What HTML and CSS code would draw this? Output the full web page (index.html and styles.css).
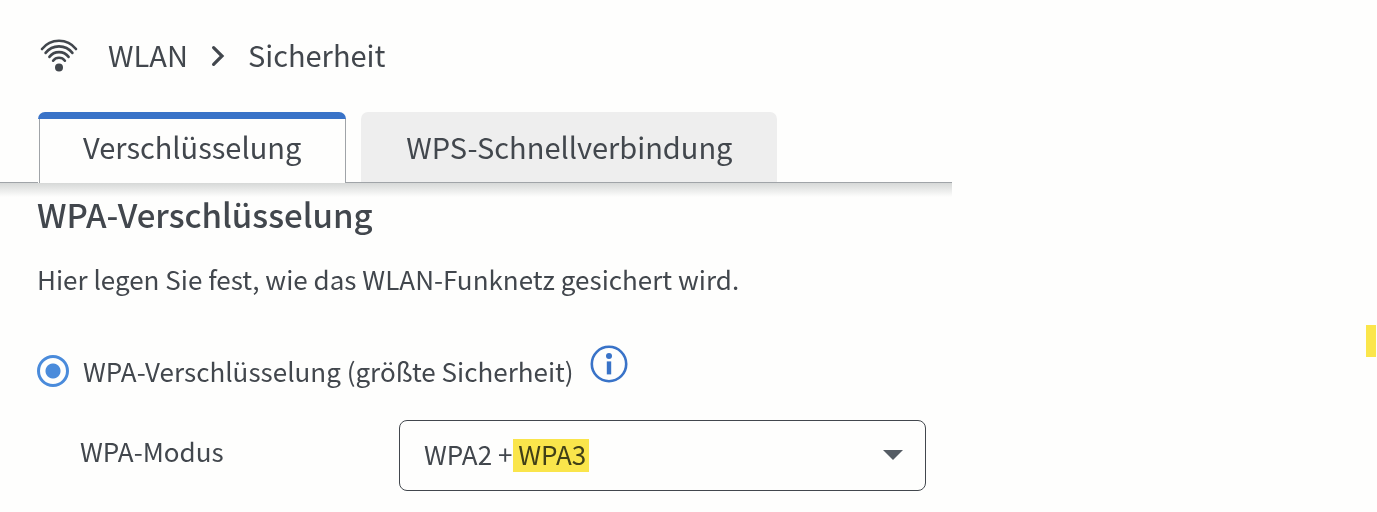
FILE: index.html
```html
<!DOCTYPE html>
<html lang="de">
<head>
    <meta charset="UTF-8">
    <meta name="viewport" content="width=device-width, initial-scale=1.0">
    <title>WLAN - Sicherheit</title>
    <link rel="stylesheet" href="styles.css">
</head>
<body>
    <div class="page">
        <main class="content">
            <nav class="breadcrumb">
                <svg class="wifi-icon" viewBox="0 0 38 34" fill="none" stroke="#42474d" stroke-width="2.6" stroke-linecap="round">
                    <path d="M2 10 A21.6 21.6 0 0 1 36 10"/>
                    <path d="M5.6 13.9 A17 17 0 0 1 32.4 13.9"/>
                    <path d="M9.4 17.9 A12 12 0 0 1 28.6 17.9"/>
                    <path d="M13.1 21.7 A7.4 7.4 0 0 1 24.9 21.7"/>
                    <circle cx="19" cy="28.4" r="4" fill="#42474d" stroke="none"/>
                </svg>
                <a href="#wlan">WLAN</a>
                <svg class="chevron" viewBox="0 0 14 22" fill="none" stroke="#42474d" stroke-width="3.2" stroke-linecap="round">
                    <path d="M2.6 2.6 L11 11 L2.6 19.4"/>
                </svg>
                <span>Sicherheit</span>
            </nav>

            <div class="tabs" role="tablist">
                <button class="tab active" role="tab" aria-selected="true">Verschlüsselung</button>
                <button class="tab" role="tab" aria-selected="false">WPS-Schnellverbindung</button>
            </div>

            <form class="panel">
                <h1>WPA-Verschlüsselung</h1>
                <p>Hier legen Sie fest, wie das WLAN-Funknetz gesichert wird.</p>

                <div class="option">
                    <input type="radio" id="wpa" name="security" checked>
                    <label for="wpa">WPA-Verschlüsselung (größte Sicherheit)</label>
                    <button type="button" class="info-btn" aria-label="Info">
                        <svg viewBox="0 0 38 38">
                            <circle cx="19" cy="19" r="17.2" fill="none" stroke="#3973c8" stroke-width="2.6"/>
                            <circle cx="19" cy="11" r="3" fill="#3973c8"/>
                            <rect x="16.8" y="16.4" width="4.4" height="13" fill="#3973c8"/>
                        </svg>
                    </button>
                </div>

                <div class="field">
                    <label for="mode">WPA-Modus</label>
                    <div class="select-box">
                        <select id="mode">
                            <option>WPA2 + WPA3</option>
                        </select>
                        <svg class="arrow" viewBox="0 0 20 10"><path d="M0 0 H20 L10 10 Z" fill="#555c64"/></svg>
                        <span class="marker"></span>
                    </div>
                </div>
            </form>
        </main>
        <aside class="side-mark"></aside>
    </div>
</body>
</html>
```

FILE: styles.css
```css
* {
    box-sizing: border-box;
}
body {
    margin: 0;
    background: #fefefd;
    color: #42474d;
    font-family: "Noto Sans CJK SC", "Open Sans", sans-serif;
    font-size: 26px;
    line-height: 36px;
}
button, select {
    font: inherit;
    color: inherit;
}
.page {
    display: flex;
    justify-content: space-between;
}
.content {
    flex: 0 1 952px;
}
.breadcrumb {
    display: flex;
    align-items: center;
    height: 112px;
    padding: 0 40px;
    font-size: 29px;
}
.breadcrumb a, .breadcrumb span {
    padding-bottom: 4px;
    color: inherit;
    text-decoration: none;
}
.wifi-icon {
    width: 38px;
    height: 34px;
    margin-right: 30px;
}
.chevron {
    width: 14px;
    height: 22px;
    margin: 0 23px;
}
.tabs {
    display: flex;
    gap: 15px;
    padding-left: 38px;
    border-bottom: 1px solid #a0a4a8;
}
.tab {
    height: 70px;
    padding: 0 45px 3px;
    border: none;
    border-radius: 7px 7px 0 0;
    background: #eeeeee;
    font-size: 29px;
    white-space: nowrap;
}
.tab.active {
    height: 71px;
    margin-bottom: -1px;
    padding-bottom: 4px;
    background:
        linear-gradient(#3973c8, #3973c8) top / 100% 7px no-repeat,
        linear-gradient(#a0a4a8, #a0a4a8) left 1px top / 1px 100% no-repeat,
        linear-gradient(#a0a4a8, #a0a4a8) right / 1px 100% no-repeat,
        #fefefd;
}
.panel {
    padding: 10px 26px 20px 37px;
    background: linear-gradient(#d6d8d7, #fefefd) top / 100% 14px no-repeat;
}
h1 {
    margin: 0;
    font-size: 33px;
    line-height: 42px;
    font-weight: 500;
}
p {
    margin: 26px 0 0;
}
.option {
    display: flex;
    align-items: center;
    margin-top: 48px;
}
.option input {
    appearance: none;
    width: 32px;
    height: 32px;
    margin: 0 14px 0 0;
    border: 3px solid #4a8bdb;
    border-radius: 50%;
    background: radial-gradient(circle, #4a8bdb 7px, transparent 8px);
}
.info-btn {
    width: 38px;
    height: 38px;
    margin: 0 0 13px 16px;
    padding: 0;
    border: none;
    background: none;
}
.info-btn svg {
    display: block;
}
.field {
    display: flex;
    align-items: center;
    margin-top: 24px;
    padding-left: 43px;
}
.field label {
    flex: 0 0 319px;
    padding-bottom: 10px;
}
.select-box {
    position: relative;
    flex: 1;
}
select {
    display: block;
    appearance: none;
    width: 100%;
    height: 71px;
    padding: 0 24px 4px;
    border: 1px solid #42474d;
    border-radius: 8px;
    background: #fefefd;
}
.arrow {
    position: absolute;
    right: 23px;
    top: 30px;
    width: 20px;
    height: 10px;
    pointer-events: none;
}
/* highlighter stroke over the WPA3 part of the value */
.marker {
    position: absolute;
    left: 114px;
    top: 19px;
    width: 76px;
    height: 33px;
    background: #fbe64b;
    mix-blend-mode: multiply;
    pointer-events: none;
}
.side-mark {
    width: 10px;
    height: 32px;
    margin: 325px 1px 0 0;
    background: #fbe64b;
}
```
